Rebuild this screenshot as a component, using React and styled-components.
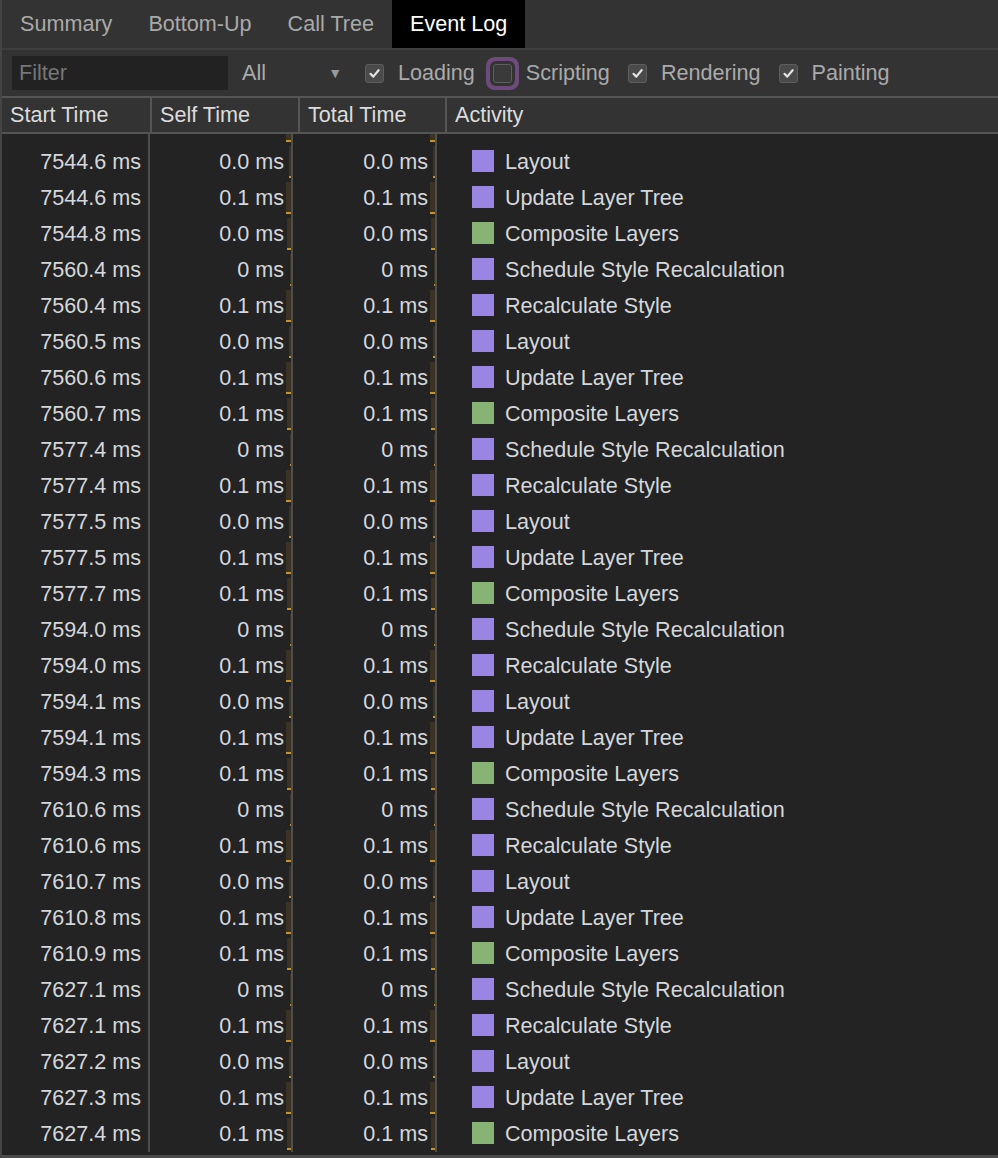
import React from 'react';
import styled, { createGlobalStyle } from 'styled-components';

const GlobalStyle = createGlobalStyle`
    html, body {
        margin: 0;
        padding: 0;
        background: #232323;
    }
    body {
        font-family: "Liberation Sans", Arial, sans-serif;
        font-size: 21.6px;
    }
`;

const Panel = styled.div`
    display: flex;
    flex-direction: column;
    width: 998px;
    height: 1158px;
    overflow: hidden;
    box-sizing: border-box;
    border-left: 2px solid #454545;
    background: #232323;
`;

const TabBar = styled.div`
    display: flex;
    height: 48px;
    background: #333;
    border-bottom: 2px solid #3e3e3e;
`;

const Tab = styled.div`
    display: flex;
    align-items: center;
    padding: 0 18px;
    color: ${props => props.active ? '#fff' : '#a9a9a9'};
    background: ${props => props.active ? '#000' : 'transparent'};
`;

const Toolbar = styled.div`
    display: flex;
    align-items: center;
    height: 46px;
    padding-left: 10px;
    background: #333;
    border-bottom: 2px solid #555;
    color: #aaa;
`;

const FilterInput = styled.input`
    width: 216px;
    height: 34px;
    box-sizing: border-box;
    padding: 0 7px;
    border: none;
    outline: none;
    background: #222;
    color: #ccc;
    font: inherit;

    &::placeholder {
        color: #767676;
    }
`;

const Select = styled.div`
    display: flex;
    align-items: center;
    justify-content: space-between;
    width: 100px;
    margin: 0 23px 0 14px;
    color: #aaa;

    span {
        font-size: 14px;
        color: #999;
    }
`;

const Label = styled.label`
    display: flex;
    align-items: center;
    gap: 14px;
    margin-right: 18px;
    color: #aaa;
`;

const Box = styled.span`
    display: flex;
    align-items: center;
    justify-content: center;
    width: 19px;
    height: 19px;
    box-sizing: border-box;
    border-radius: 3px;
    border: 1px solid #5e5e5e;
    background: ${props => props.checked ? '#4a4a4a' : '#3a3a3a'};
    box-shadow: ${props => props.focused ? '0 0 0 3px #333, 0 0 0 7px #6e4a7d' : 'none'};
`;

const HeaderRow = styled.div`
    display: grid;
    grid-template-columns: 150px 148px 147px 1fr;
    height: 34px;
    background: #333;
    border-bottom: 2px solid #555;
`;

const HeaderCell = styled.div`
    display: flex;
    align-items: center;
    padding-left: 8px;
    color: #dcdcdc;
    border-right: ${props => props.last ? 'none' : '2px solid #555'};
`;

const Body = styled.div`
    height: 1021px;
    overflow: hidden;
    border-bottom: 3px solid #4b4b4b;
`;

const Row = styled.div`
    display: grid;
    grid-template-columns: 148px 143px 144px 1fr;
    height: ${props => props.partial ? '10px' : '36px'};
`;

const TimeCell = styled.div`
    display: flex;
    align-items: center;
    justify-content: flex-end;
    padding-right: ${props => props.bar ? '0' : '7px'};
    border-right: 2px solid #4e4e4e;
    color: #d4d7db;
`;

const Bar = styled.div`
    align-self: stretch;
    width: ${props => props.width}px;
    margin: ${props => props.partial ? '0' : '2px'} 0 2px 1px;
    background: #3a3323;
    border-bottom: 2px solid #c7922b;
`;

const BarSpacer = styled.div`
    width: 6px;
    margin-left: 1px;
    display: flex;
    justify-content: flex-end;
    align-self: stretch;
`;

const ActivityCell = styled.div`
    display: flex;
    align-items: center;
    gap: 11px;
    padding-left: 35px;
    color: #d4d7db;
`;

const Swatch = styled.span`
    width: 22px;
    height: 22px;
    margin-top: -2px;
    background: ${props => props.color};
`;

const kinds = {
    'Layout': { color: '#9a86e2', bar: 2 },
    'Update Layer Tree': { color: '#9a86e2', bar: 6 },
    'Composite Layers': { color: '#87b474', bar: 4 },
    'Schedule Style Recalculation': { color: '#9a86e2', bar: 1 },
    'Recalculate Style': { color: '#9a86e2', bar: 6 },
};

const events = [
    ['7544.6', '0.0', 'Layout'],
    ['7544.6', '0.1', 'Update Layer Tree'],
    ['7544.8', '0.0', 'Composite Layers'],
    ['7560.4', '0', 'Schedule Style Recalculation'],
    ['7560.4', '0.1', 'Recalculate Style'],
    ['7560.5', '0.0', 'Layout'],
    ['7560.6', '0.1', 'Update Layer Tree'],
    ['7560.7', '0.1', 'Composite Layers'],
    ['7577.4', '0', 'Schedule Style Recalculation'],
    ['7577.4', '0.1', 'Recalculate Style'],
    ['7577.5', '0.0', 'Layout'],
    ['7577.5', '0.1', 'Update Layer Tree'],
    ['7577.7', '0.1', 'Composite Layers'],
    ['7594.0', '0', 'Schedule Style Recalculation'],
    ['7594.0', '0.1', 'Recalculate Style'],
    ['7594.1', '0.0', 'Layout'],
    ['7594.1', '0.1', 'Update Layer Tree'],
    ['7594.3', '0.1', 'Composite Layers'],
    ['7610.6', '0', 'Schedule Style Recalculation'],
    ['7610.6', '0.1', 'Recalculate Style'],
    ['7610.7', '0.0', 'Layout'],
    ['7610.8', '0.1', 'Update Layer Tree'],
    ['7610.9', '0.1', 'Composite Layers'],
    ['7627.1', '0', 'Schedule Style Recalculation'],
    ['7627.1', '0.1', 'Recalculate Style'],
    ['7627.2', '0.0', 'Layout'],
    ['7627.3', '0.1', 'Update Layer Tree'],
    ['7627.4', '0.1', 'Composite Layers'],
];

const Check = () => (
    <svg width="13" height="13" viewBox="0 0 13 13">
        <path d="M2.5 6.8 L5.3 9.6 L10.6 3.2" fill="none" stroke="#e2e2e2" strokeWidth="2.2" strokeLinecap="round" strokeLinejoin="round" />
    </svg>
);

const Toggle = ({ label, checked, focused }) => (
    <Label>
        <Box checked={checked} focused={focused}>{checked && <Check />}</Box>
        {label}
    </Label>
);

const TimeBar = ({ width, partial }) => (
    <BarSpacer><Bar width={width} partial={partial} /></BarSpacer>
);

const App = () => {
    const tabs = ['Summary', 'Bottom-Up', 'Call Tree', 'Event Log'];

    return (
        <Panel>
            <GlobalStyle />
            <TabBar>
                {tabs.map(t => <Tab key={t} active={t === 'Event Log'}>{t}</Tab>)}
            </TabBar>
            <Toolbar>
                <FilterInput placeholder="Filter" />
                <Select>All <span>▼</span></Select>
                <Toggle label="Loading" checked />
                <Toggle label="Scripting" focused />
                <Toggle label="Rendering" checked />
                <Toggle label="Painting" checked />
            </Toolbar>
            <HeaderRow>
                <HeaderCell>Start Time</HeaderCell>
                <HeaderCell>Self Time</HeaderCell>
                <HeaderCell>Total Time</HeaderCell>
                <HeaderCell last>Activity</HeaderCell>
            </HeaderRow>
            <Body>
                {/* tail of the row scrolled out above */}
                <Row partial>
                    <TimeCell />
                    <TimeCell bar><TimeBar width={6} partial /></TimeCell>
                    <TimeCell bar><TimeBar width={6} partial /></TimeCell>
                    <ActivityCell />
                </Row>
                {events.map(([start, self, name], i) => {
                    const kind = kinds[name];
                    return (
                        <Row key={i}>
                            <TimeCell>{start} ms</TimeCell>
                            <TimeCell bar>
                                {self} ms
                                <TimeBar width={kind.bar} />
                            </TimeCell>
                            <TimeCell bar>
                                {self} ms
                                <TimeBar width={kind.bar} />
                            </TimeCell>
                            <ActivityCell>
                                <Swatch color={kind.color} />
                                {name}
                            </ActivityCell>
                        </Row>
                    );
                })}
            </Body>
        </Panel>
    );
};

export default App;
